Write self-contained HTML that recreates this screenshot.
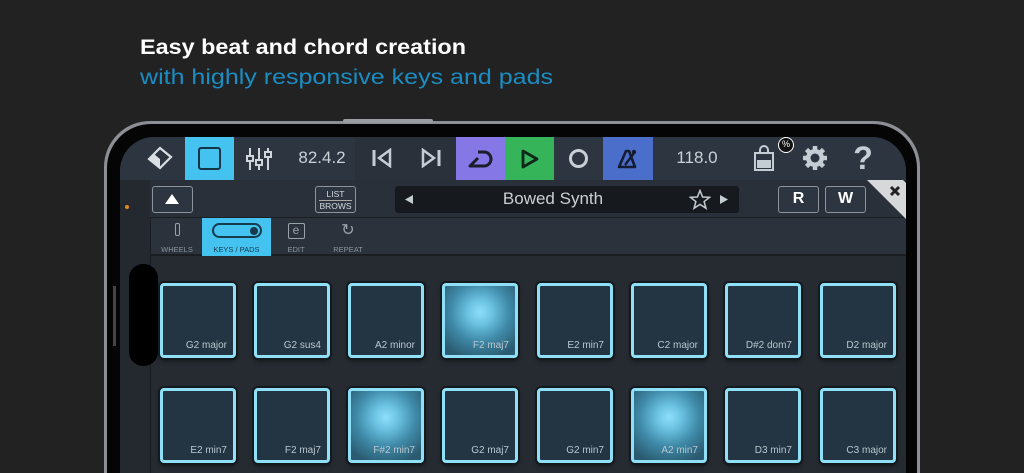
<!DOCTYPE html>
<html style="overflow:hidden;width:1024px;height:473px"><head><meta charset="utf-8"><style>
*{margin:0;padding:0;box-sizing:border-box}
body{width:1024px;height:473px;background:#222222;overflow:hidden;position:relative;font-family:"Liberation Sans",sans-serif}
.a{position:absolute}
.pad{position:absolute;width:76px;height:75px;border:3px solid #8fe0f7;border-radius:4px;background:#233442;box-shadow:0 0 0 2px #14191e,0 3px 5px rgba(0,0,0,.5);color:#b9c7d0;font-size:10px;text-align:right;padding:0 6px 4px 0;display:flex;align-items:flex-end;justify-content:flex-end}
.pad.on{background:radial-gradient(ellipse 70% 70% at 50% 38%,#8fe0fb 0%,#6cc2e2 25%,#3f8aa8 60%,#2a5a70 100%)}
.lbl{position:absolute;color:#c9d2d9;font-size:17px;text-align:center}
.tab{position:absolute;top:218px;height:38px;color:#8b949c;font-size:7.5px;text-align:center}
</style></head><body>
<svg class="a" style="left:0;top:0" width="600" height="100">
<text x="140" y="54" font-family="Liberation Sans" font-weight="bold" font-size="21" fill="#fff" textLength="326" lengthAdjust="spacingAndGlyphs">Easy beat and chord creation</text>
<text x="140" y="84" font-family="Liberation Sans" font-size="21.5" fill="#1b8dc3" textLength="413" lengthAdjust="spacingAndGlyphs">with highly responsive keys and pads</text>
</svg>
<!-- phone frame -->
<div class="a" style="left:104px;top:121px;width:816px;height:352px;border-radius:46px 46px 0 0;background:#8c8f94"></div>
<div class="a" style="left:343px;top:119px;width:90px;height:4px;background:#9a9da2;border-radius:2px"></div>
<div class="a" style="left:107px;top:124px;width:810px;height:349px;border-radius:44px 44px 0 0;background:#050505"></div>
<div class="a" style="left:113px;top:286px;width:3px;height:60px;background:#444;"></div>
<!-- screen -->
<div class="a" style="left:120px;top:137px;width:786px;height:336px;border-radius:34px 34px 0 0;background:#262b32;overflow:hidden">
  <div class="a" style="left:0;top:0;width:786px;height:43px;background:#2d3540"></div>
  <div class="a" style="left:0;top:43px;width:786px;height:38px;background:#29303a;border-bottom:1px solid #1b1f24"></div>
  <div class="a" style="left:0;top:81px;width:786px;height:38px;background:#2b323b;border-bottom:2px solid #1a1e23"></div>
  <div class="a" style="left:0;top:43px;width:30px;height:300px;background:#24292f"></div>
  <div class="a" style="left:30px;top:81px;width:1px;height:260px;background:#1a1e23"></div>
</div>
<!-- toolbar -->
<svg class="a" style="left:147px;top:146px" width="26" height="26" viewBox="0 0 26 26"><path d="M13 2 L24 11 L13 22 L2 13 Z" fill="none" stroke="#d9dfe4" stroke-width="2.2"/><path d="M2 13 L13 22 L13 13 L7 8 Z" fill="#d9dfe4"/></svg>
<div class="a" style="left:185px;top:137px;width:49px;height:43px;background:#44c2f0"></div>
<div class="a" style="left:198px;top:147px;width:23px;height:23px;border:2.5px solid #143548;border-radius:3px"></div>
<svg class="a" style="left:245px;top:146px" width="28" height="26" viewBox="0 0 28 26"><g stroke="#cfd6dc" stroke-width="2" fill="#cfd6dc"><line x1="5" y1="2" x2="5" y2="24"/><line x1="14" y1="2" x2="14" y2="24"/><line x1="23" y1="2" x2="23" y2="24"/><rect x="2" y="10" width="6" height="5" fill="#2d3540"/><rect x="11" y="14" width="6" height="5" fill="#2d3540"/><rect x="20" y="6" width="6" height="5" fill="#2d3540"/></g></svg>
<div class="lbl" style="left:292px;top:148px;width:60px">82.4.2</div>
<div class="a" style="left:355px;top:137px;width:101px;height:43px;background:#2a313b"></div>
<svg class="a" style="left:371px;top:148px" width="22" height="20" viewBox="0 0 22 20"><line x1="3" y1="2" x2="3" y2="18" stroke="#c4cdd4" stroke-width="3"/><path d="M19 2 L8 10 L19 18 Z" fill="none" stroke="#c4cdd4" stroke-width="2.5"/></svg>
<svg class="a" style="left:420px;top:148px" width="22" height="20" viewBox="0 0 22 20"><line x1="19" y1="2" x2="19" y2="18" stroke="#c4cdd4" stroke-width="3"/><path d="M3 2 L14 10 L3 18 Z" fill="none" stroke="#c4cdd4" stroke-width="2.5"/></svg>
<div class="a" style="left:456px;top:137px;width:49px;height:43px;background:#8578e6"></div>
<svg class="a" style="left:466px;top:146px" width="30" height="26" viewBox="0 0 30 26"><path d="M12 6 L18 6 A7 7 0 0 1 18 20 L4 20 L12 12" fill="none" stroke="#1b1d2a" stroke-width="3" stroke-linejoin="round"/></svg>
<div class="a" style="left:505px;top:137px;width:49px;height:43px;background:#36b45a"></div>
<svg class="a" style="left:519px;top:148px" width="22" height="22" viewBox="0 0 22 22"><path d="M4 3 L18 11 L4 19 Z" fill="none" stroke="#10281a" stroke-width="2.8" stroke-linejoin="round"/></svg>
<div class="a" style="left:569px;top:149px;width:19px;height:19px;border:3px solid #c8d0d6;border-radius:50%"></div>
<div class="a" style="left:603px;top:137px;width:50px;height:43px;background:#4c6ecb"></div>
<svg class="a" style="left:615px;top:146px" width="26" height="26" viewBox="0 0 26 26"><path d="M4 21 L11 5 L14 5 L20 21 Z" fill="none" stroke="#141c30" stroke-width="2.6" stroke-linejoin="round"/><line x1="10" y1="19" x2="19" y2="7" stroke="#141c30" stroke-width="2.4"/><circle cx="19" cy="6" r="2.2" fill="#141c30"/></svg>
<div class="lbl" style="left:667px;top:148px;width:60px">118.0</div>
<svg class="a" style="left:751px;top:144px" width="26" height="28" viewBox="0 0 26 28"><path d="M9 10 V6 A4 4 0 0 1 17 6 V10" fill="none" stroke="#c4cdd4" stroke-width="2"/><path d="M4 9 H22 V26 H4 Z" fill="none" stroke="#c4cdd4" stroke-width="2"/><rect x="6" y="16" width="14" height="8" fill="#c4cdd4"/></svg>
<div class="a" style="left:778px;top:137px;width:16px;height:16px;border:1.5px solid #fff;border-radius:50%;background:#111;color:#fff;font-size:9px;text-align:center;line-height:13px">%</div>
<svg class="a" style="left:801px;top:144px" width="28" height="28" viewBox="0 0 28 28"><g fill="#c4cdd4"><circle cx="14" cy="14" r="9"/><g stroke="#c4cdd4" stroke-width="4.5"><line x1="14" y1="2" x2="14" y2="26"/><line x1="2" y1="14" x2="26" y2="14"/><line x1="5.5" y1="5.5" x2="22.5" y2="22.5"/><line x1="22.5" y1="5.5" x2="5.5" y2="22.5"/></g></g><circle cx="14" cy="14" r="4.5" fill="#2d3540"/></svg>
<div class="a" style="left:850px;top:138px;width:26px;color:#c4cdd4;font-size:32px;font-weight:bold;text-align:center;line-height:40px">?</div>
<!-- row 2 -->
<div class="a" style="left:125px;top:205px;width:4px;height:4px;border-radius:50%;background:#e08b1c"></div>
<div class="a" style="left:152px;top:186px;width:41px;height:27px;border:1.5px solid #8d949b;border-radius:3px;background:#2d3540"></div>
<svg class="a" style="left:164px;top:193px" width="16" height="12"><path d="M8 1 L15 11 L1 11 Z" fill="#fff"/></svg>
<div class="a" style="left:315px;top:186px;width:41px;height:27px;border:1.5px solid #8d949b;border-radius:3px;background:#2d3540;color:#d4dade;font-size:8.5px;text-align:center;line-height:10px;padding-top:2px">LIST<div style="border-top:1px solid #aaa;margin:1px 3px 0"></div>BROWS</div>
<div class="a" style="left:395px;top:186px;width:344px;height:27px;border-radius:3px;background:#16191d"></div>
<svg class="a" style="left:404px;top:194px" width="10" height="11"><path d="M9 1 L1 5.5 L9 10 Z" fill="#c4cdd4"/></svg>
<div class="a" style="left:460px;top:189px;width:186px;color:#c9d0d6;font-size:17px;text-align:center">Bowed Synth</div>
<svg class="a" style="left:689px;top:189px" width="22" height="21" viewBox="0 0 22 21"><path d="M11 1.5 L13.6 8 L20.5 8.3 L15.1 12.6 L17 19.3 L11 15.4 L5 19.3 L6.9 12.6 L1.5 8.3 L8.4 8 Z" fill="none" stroke="#c4cdd4" stroke-width="1.5"/></svg>
<svg class="a" style="left:719px;top:194px" width="10" height="11"><path d="M1 1 L9 5.5 L1 10 Z" fill="#c4cdd4"/></svg>
<div class="a" style="left:778px;top:186px;width:41px;height:27px;border:1.5px solid #8d949b;border-radius:3px;background:#2d3540;color:#fff;font-weight:bold;font-size:16px;text-align:center;line-height:24px">R</div>
<div class="a" style="left:825px;top:186px;width:41px;height:27px;border:1.5px solid #8d949b;border-radius:3px;background:#2d3540;color:#fff;font-weight:bold;font-size:16px;text-align:center;line-height:24px">W</div>
<svg class="a" style="left:867px;top:180px" width="39" height="39"><path d="M0 0 L36 0 L39 3 L39 39 Z" fill="#d6d8da"/><path d="M24 7 L32 15 M32 7 L24 15" stroke="#222" stroke-width="3"/></svg>
<!-- tabs -->
<div class="tab" style="left:152px;width:50px"><div style="margin:5px auto 0;width:5px;height:13px;border:1.5px solid #9aa2a9;border-radius:2px"></div><div style="margin-top:9px">WHEELS</div></div>
<div class="tab" style="left:202px;width:69px;background:#44c2f0;color:#173a4d"><div style="margin:5px auto 0;width:50px;height:15px;border:2px solid #173a4d;border-radius:8px;position:relative"><div style="position:absolute;right:2px;top:2px;width:8px;height:8px;border-radius:50%;background:#173a4d"></div></div><div style="margin-top:7px">KEYS / PADS</div></div>
<div class="tab" style="left:271px;width:50px"><div style="margin:5px auto 0;width:17px;height:16px;border:1.5px solid #9aa2a9;border-radius:2px;color:#9aa2a9;font-size:12px;line-height:12px">e</div><div style="margin-top:6px">EDIT</div></div>
<div class="tab" style="left:323px;width:50px"><div style="margin:4px auto 0;width:17px;height:17px;color:#9aa2a9;font-size:16px;line-height:17px">&#x21BB;</div><div style="margin-top:6px">REPEAT</div></div>
<!-- notch pill -->
<div class="a" style="left:129px;top:264px;width:29px;height:102px;border-radius:14px;background:#000"></div>
<!-- pads -->
<div class="pad" style="left:160px;top:283px">G2 major</div>
<div class="pad" style="left:254px;top:283px">G2 sus4</div>
<div class="pad" style="left:348px;top:283px">A2 minor</div>
<div class="pad on" style="left:442px;top:283px">F2 maj7</div>
<div class="pad" style="left:537px;top:283px">E2 min7</div>
<div class="pad" style="left:631px;top:283px">C2 major</div>
<div class="pad" style="left:725px;top:283px">D#2 dom7</div>
<div class="pad" style="left:820px;top:283px">D2 major</div>
<div class="pad" style="left:160px;top:388px">E2 min7</div>
<div class="pad" style="left:254px;top:388px">F2 maj7</div>
<div class="pad on" style="left:348px;top:388px">F#2 min7</div>
<div class="pad" style="left:442px;top:388px">G2 maj7</div>
<div class="pad" style="left:537px;top:388px">G2 min7</div>
<div class="pad on" style="left:631px;top:388px">A2 min7</div>
<div class="pad" style="left:725px;top:388px">D3 min7</div>
<div class="pad" style="left:820px;top:388px">C3 major</div>
</body></html>
